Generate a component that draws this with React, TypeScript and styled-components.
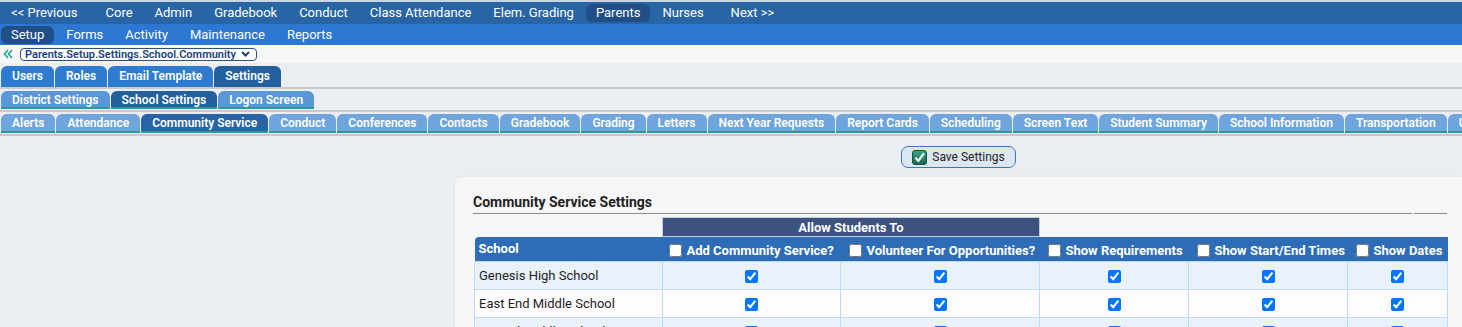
import React from 'react';
import styled, { createGlobalStyle } from 'styled-components';

const GlobalStyle = createGlobalStyle`
  body {
    margin: 0;
    background: #eaeef3;
    font-family: Roboto, "Liberation Sans", Arial, sans-serif;
  }
`;

const TopNav = styled.nav<{ $sub?: boolean }>`
  display: flex;
  align-items: center;
  gap: 2px;
  height: ${p => (p.$sub ? '21px' : '22px')};
  padding-left: 1px;
  background: ${p => (p.$sub ? '#2c77d2' : '#2964a4')};
  border-top: ${p => (p.$sub ? 'none' : '2px solid #c9d6e8')};
`;

const NavItem = styled.a<{ $active?: boolean; $pushLeft?: number; $pushRight?: number }>`
  height: 18px;
  line-height: 18px;
  padding: 0 10px;
  border-radius: 6px;
  color: #fff;
  font-size: 13px;
  white-space: nowrap;
  background: ${p => (p.$active ? '#1f4f86' : 'transparent')};
  margin-left: ${p => p.$pushLeft ?? 0}px;
  margin-right: ${p => p.$pushRight ?? 0}px;
`;

const Crumbs = styled.div`
  display: flex;
  align-items: center;
  height: 18px;
  padding-left: 3px;
  background: #f6f6f6;
`;

const PathSelect = styled.div`
  display: flex;
  align-items: center;
  justify-content: space-between;
  box-sizing: border-box;
  width: 237px;
  height: 13px;
  margin-left: 7px;
  padding: 0 6px 0 4px;
  border: 1px solid #2a4f86;
  border-radius: 4px;
  background: #fff;
  color: #1d3f7b;
  font-size: 11px;
  font-weight: 600;
`;

const TabStrip = styled.div<{ $pad: number }>`
  display: flex;
  gap: 1px;
  padding: ${p => p.$pad}px 1px 0;
  border-bottom: 2px solid #c6cacf;
  overflow: hidden;
  white-space: nowrap;
`;

const tabColors = {
  1: { idle: '#2f7bd0', on: '#245f9e', line: 'transparent', h: 21 },
  2: { idle: '#5b96d6', on: '#24609c', line: '#2a9a98', h: 18 },
  3: { idle: '#6fa4dc', on: '#2864a5', line: '#2a9a98', h: 19 },
} as const;

const Tab = styled.span<{ $level: 1 | 2 | 3; $active?: boolean }>`
  flex: none;
  box-sizing: border-box;
  height: ${p => tabColors[p.$level].h}px;
  line-height: ${p => tabColors[p.$level].h}px;
  padding: 0 11px;
  border-radius: 6px 6px 0 0;
  border-bottom: ${p => (p.$level === 1 ? 'none' : `2px solid ${tabColors[p.$level].line}`)};
  background: ${p => (p.$active ? tabColors[p.$level].on : tabColors[p.$level].idle)};
  color: #fff;
  font-size: 12px;
  font-weight: 600;
  overflow: hidden;
  margin-bottom: ${p => (p.$level === 1 ? 0 : 1)}px;
`;

const Content = styled.main`
  display: flex;
`;

const SideGap = styled.aside`
  flex: none;
  width: 455px;
`;

const Main = styled.section`
  flex: 1;
  min-width: 0;
  display: flex;
  flex-direction: column;
  align-items: center;
  padding-top: 10px;
`;

const SaveButton = styled.button`
  display: flex;
  align-items: center;
  gap: 5px;
  box-sizing: border-box;
  height: 22px;
  padding: 0 10px;
  border: 1px solid #3d74c4;
  border-radius: 7px;
  background: #dde7f3;
  color: #222;
  font-family: inherit;
  font-size: 12px;
  white-space: nowrap;
`;

const Card = styled.div`
  align-self: stretch;
  margin-top: 9px;
  padding: 17px 15px 0 18px;
  background: #f6f6f6;
  border-radius: 6px 0 0 0;
  box-shadow: 0 0 2px rgba(0, 0, 0, 0.08);
`;

const TitleRow = styled.div`
  display: flex;
  gap: 2px;
  width: 974px;
`;

const Title = styled.h2`
  flex: 1;
  margin: 0;
  padding-bottom: 2px;
  border-bottom: 1px solid #8a8a8a;
  color: #222;
  font-size: 14px;
  font-weight: 700;
  line-height: 17px;
`;

const TitleTail = styled.div`
  width: 33px;
  border-bottom: 1px solid #8a8a8a;
`;

const Grid = styled.table`
  width: 973px;
  margin: 3px 0 0 1px;
  table-layout: fixed;
  border-collapse: collapse;
  font-size: 13px;
`;

const Band = styled.th`
  height: 18px;
  padding: 0;
  border: 1px solid #c2cfe3;
  background: #3e527f;
  color: #fff;
  font-weight: 700;
  text-align: center;
`;

const HeadRow = styled.tr`
  height: 25px;
  background: #2d6db8;
  color: #fff;
`;

const HeadCell = styled.th<{ $pad?: number }>`
  padding: 3px 0 0 ${p => p.$pad ?? 8}px;
  font-weight: 700;
  text-align: left;
  white-space: nowrap;
  &:first-child {
    border-radius: 4px 0 0 0;
    padding: 0 0 1px 4px;
  }
`;

const HeadBox = styled.input`
  width: 13px;
  height: 13px;
  margin: 0 5px 0 0;
  vertical-align: -2px;
`;

const BodyRow = styled.tr<{ $alt?: boolean }>`
  height: 28px;
  background: ${p => (p.$alt ? '#fefcff' : '#e9f2fb')};
`;

const Cell = styled.td<{ $name?: boolean }>`
  padding: ${p => (p.$name ? '0 0 0 4px' : '0')};
  border: 1px solid #bedbf3;
  color: #1e1e1e;
  text-align: ${p => (p.$name ? 'left' : 'center')};
`;

const RowBox = styled.input`
  width: 13px;
  height: 13px;
  margin: 0;
  vertical-align: middle;
`;

const topLinks = ['Core', 'Admin', 'Gradebook', 'Conduct', 'Class Attendance', 'Elem. Grading'];
const subLinks = ['Setup', 'Forms', 'Activity', 'Maintenance', 'Reports'];
const levelOne = ['Users', 'Roles', 'Email Template', 'Settings'];
const levelTwo = ['District Settings', 'School Settings', 'Logon Screen'];
const levelThree = [
  'Alerts', 'Attendance', 'Community Service', 'Conduct', 'Conferences', 'Contacts',
  'Gradebook', 'Grading', 'Letters', 'Next Year Requests', 'Report Cards', 'Scheduling',
  'Screen Text', 'Student Summary', 'School Information', 'Transportation', 'User Defined',
];
const options = [
  'Add Community Service?', 'Volunteer For Opportunities?', 'Show Requirements',
  'Show Start/End Times', 'Show Dates',
];
const schools = ['Genesis High School', 'East End Middle School', 'Central Middle School'];
const colWidths = [188, 178, 199, 149, 159, 100];

const BackIcon = () => (
  <svg width="10" height="10" viewBox="0 0 10 10">
    <path d="M5 1 L1.5 5 L5 9 M9 1 L5.5 5 L9 9" fill="none" stroke="#1fa39a" strokeWidth="1.6" />
  </svg>
);

const Chevron = () => (
  <svg width="9" height="6" viewBox="0 0 9 6">
    <path d="M1 1 L4.5 4.5 L8 1" fill="none" stroke="#1d3f7b" strokeWidth="2" />
  </svg>
);

const SaveIcon = () => (
  <svg width="15" height="15" viewBox="0 0 15 15">
    <defs>
      <linearGradient id="sv" x1="0" y1="0" x2="0" y2="1">
        <stop offset="0" stopColor="#3aa788" />
        <stop offset="1" stopColor="#12664f" />
      </linearGradient>
    </defs>
    <rect x="0.5" y="0.5" width="14" height="14" rx="2.5" fill="url(#sv)" stroke="#0e5642" />
    <path d="M3.5 7.8 L6.3 10.8 L11.8 3.5" fill="none" stroke="#fff" strokeWidth="2.2" />
  </svg>
);

const App = () => (
  <>
    <GlobalStyle />
    <TopNav>
      <NavItem $pushRight={6}>&lt;&lt; Previous</NavItem>
      {topLinks.map(l => <NavItem key={l}>{l}</NavItem>)}
      <NavItem $active>Parents</NavItem>
      <NavItem>Nurses</NavItem>
      <NavItem $pushLeft={5}>Next &gt;&gt;</NavItem>
    </TopNav>
    <TopNav $sub>
      {subLinks.map((l, i) => <NavItem key={l} $active={i === 0}>{l}</NavItem>)}
    </TopNav>
    <Crumbs>
      <BackIcon />
      <PathSelect>
        Parents.Setup.Settings.School.Community
        <Chevron />
      </PathSelect>
    </Crumbs>
    <TabStrip $pad={3}>
      {levelOne.map(t => <Tab key={t} $level={1} $active={t === 'Settings'}>{t}</Tab>)}
    </TabStrip>
    <TabStrip $pad={2}>
      {levelTwo.map(t => <Tab key={t} $level={2} $active={t === 'School Settings'}>{t}</Tab>)}
    </TabStrip>
    <TabStrip $pad={2}>
      {levelThree.map(t => <Tab key={t} $level={3} $active={t === 'Community Service'}>{t}</Tab>)}
    </TabStrip>
    <Content>
      <SideGap />
      <Main>
        <SaveButton type="button">
          <SaveIcon />
          Save Settings
        </SaveButton>
        <Card>
          <TitleRow>
            <Title>Community Service Settings</Title>
            <TitleTail />
          </TitleRow>
          <Grid>
            <colgroup>
              {colWidths.map((w, i) => <col key={i} style={{ width: w }} />)}
            </colgroup>
            <thead>
              <tr>
                <td />
                <Band colSpan={2}>Allow Students To</Band>
                <td colSpan={3} />
              </tr>
              <HeadRow>
                <HeadCell>School</HeadCell>
                {options.map((o, i) => (
                  <HeadCell key={o} $pad={i === 0 ? 6 : 8}>
                    <HeadBox type="checkbox" readOnly />
                    {o}
                  </HeadCell>
                ))}
              </HeadRow>
            </thead>
            <tbody>
              {schools.map((s, r) => (
                <BodyRow key={s} $alt={r % 2 === 1}>
                  <Cell $name>{s}</Cell>
                  {options.map(o => (
                    <Cell key={o}>
                      <RowBox type="checkbox" checked readOnly />
                    </Cell>
                  ))}
                </BodyRow>
              ))}
            </tbody>
          </Grid>
        </Card>
      </Main>
    </Content>
  </>
);

export default App;
